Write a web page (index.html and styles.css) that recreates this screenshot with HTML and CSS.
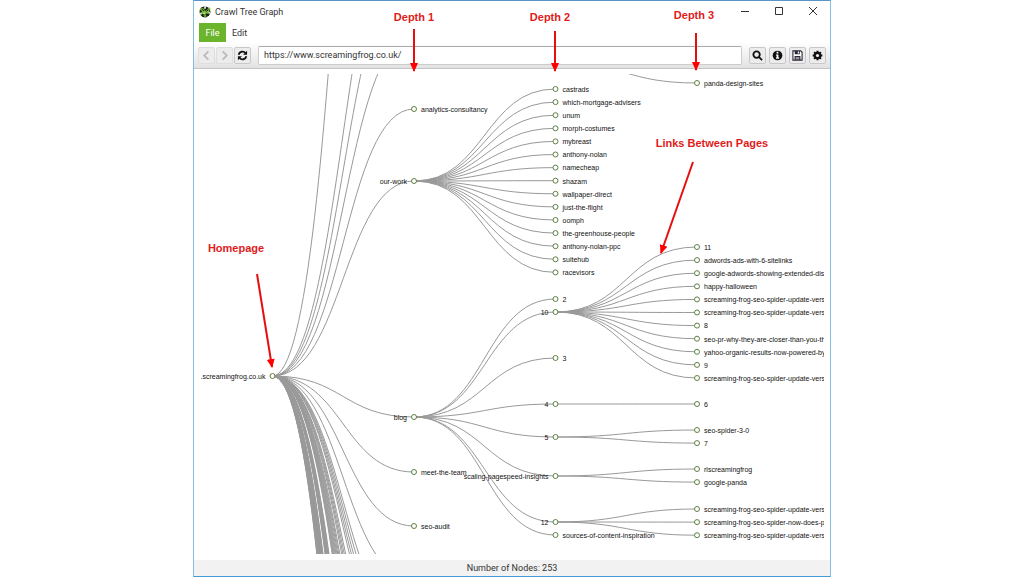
FILE: index.html
```html
<!DOCTYPE html>
<html lang="en">
<head>
<meta charset="utf-8">
<title>Crawl Tree Graph</title>
<link rel="stylesheet" href="styles.css">
</head>
<body>
<div class="window">
  <header class="titlebar">
    <svg class="app-icon" viewBox="0 0 24 24" aria-hidden="true">
      <path d="M4 3l6-2 7 1 5 5 1 6-3 6-6 4-7-1-5-5-1-7z" fill="#18240f"/>
      <path d="M1 7c2-4 6-4 9-1l2 4 4-2 4-6 3 3-3 5 2 3-4 3-3-1-2 1 2 6-5-1-2-5-4 1-3-3 4-2 1-2z" fill="#7cb83c"/>
      <path d="M11 1l3 1-1 4-3-1zM19 12l4 1-3 3zM8 13l4 1-2 2zM1 14l4 1-1 4z" fill="#fff"/>
      <path d="M5 6l5 4M15 11l4-4M7 17l4 1M14 17l3-1" stroke="#18240f" stroke-width="2"/>
    </svg>
    <h1 class="title">Crawl Tree Graph</h1>
    <div class="window-controls">
      <button class="wc" aria-label="Minimize"><svg viewBox="0 0 10 10"><path d="M1 5.5h8"/></svg></button>
      <button class="wc" aria-label="Maximize"><svg viewBox="0 0 10 10"><path d="M1.5 1.5h7v7h-7z"/></svg></button>
      <button class="wc" aria-label="Close"><svg viewBox="0 0 10 10"><path d="M1 1l8 8M9 1l-8 8"/></svg></button>
    </div>
  </header>
  <nav class="menu">
    <button class="menu-item active">File</button>
    <button class="menu-item">Edit</button>
  </nav>
  <div class="toolbar">
    <div class="group nav-group">
      <button class="tool" aria-label="Back" disabled><svg viewBox="0 0 12 12"><path class="line" d="M8 1.5L3.5 6 8 10.500"/></svg></button>
      <button class="tool" aria-label="Forward" disabled><svg viewBox="0 0 12 12"><path class="line" d="M4 1.5L8.5 6 4 10.5"/></svg></button>
      <button class="tool" aria-label="Refresh"><svg viewBox="0 0 12 12"><path class="line" d="M1.8 5.2A4.3 4.3 0 0 1 9.3 3.3M10.2 6.8A4.3 4.3 0 0 1 2.7 8.7"/><path d="M11 .8v4.400H6.600zM1 11.200V6.800h4.400z"/></svg></button>
    </div>
    <input class="address" type="text" aria-label="Address" value="https://www.screamingfrog.co.uk/">
    <div class="group">
      <button class="tool" aria-label="Search"><svg viewBox="0 0 12 12"><circle class="line" cx="5" cy="5" r="3.5"/><path class="line" d="M7.7 7.7L11 11"/></svg></button>
      <button class="tool" aria-label="Information"><svg viewBox="0 0 12 12"><circle cx="6" cy="6" r="5.3"/><path fill="#fff" d="M5 2h2v1.7H5zM4.3 4.8H7v3.400h.8v1.3H4.3V8.2H5V6h-.7z"/></svg></button>
      <button class="tool" aria-label="Save"><svg viewBox="0 0 12 12"><path fill="#fff" stroke="#2b2535" stroke-width="1.2" d="M1 1h8.5L11 2.5V11H1z"/><path fill="#2b2535" d="M3 1h5.5v3.5H3zM2.8 6.5h6.4V11H2.8z"/><path fill="#fff" d="M6.3 1.6h1.3v2.2H6.3zM4 7.5h4V8.3H4zM4 9.2h4v.8H4z"/></svg></button>
      <button class="tool" aria-label="Settings"><svg viewBox="0 0 12 12"><circle cx="6" cy="6" r="4.2"/><path stroke="#111" stroke-width="2.2" d="M6 .7v10.6M.7 6h10.6M2.3 2.3l7.4 7.4M9.7 2.3L2.3 9.7"/><circle cx="6" cy="6" r="1.7" fill="#eee"/></svg></button>
    </div>
  </div>
  <main class="pane"><svg class="graph" role="img" aria-label="Crawl tree"></svg></main>
  <footer class="status">Number of Nodes: 253</footer>
  <svg class="notes">
    <defs>
      <marker id="head" viewBox="0 0 9 9" refX="8" refY="4.5" markerWidth="9" markerHeight="9" markerUnits="userSpaceOnUse" orient="auto"><path d="M0 0.5L9 4.5L0 8.5z"/></marker>
    </defs>
    <path class="arrow" d="M220 28V70"/>
    <path class="arrow" d="M361 30V70"/>
    <path class="arrow" d="M502 32V69"/>
    <path class="arrow" d="M499 161L467 252"/>
    <path class="arrow" d="M63 273L78 366"/>
    <text x="220" y="20">Depth 1</text>
    <text x="356" y="20">Depth 2</text>
    <text x="500" y="18">Depth 3</text>
    <text x="518" y="146">Links Between Pages</text>
    <text x="42" y="251">Homepage</text>
  </svg>
</div>
<script src="graph.js"></script>
</body>
</html>
```

FILE: styles.css
```css
* { box-sizing: border-box; }

body {
  margin: 0;
  padding: 0 193px;
  background: #fff;
  color: #333;
  font-family: Roboto, "Open Sans", sans-serif;
  font-size: 9px;
}

button { font: inherit; padding: 0; border: 0; background: none; color: inherit; }

.window {
  position: relative;
  display: flex;
  flex-direction: column;
  height: 100vh;
  border: 1px solid #85bfde;
  border-top-color: #5b94c6;
  border-bottom-color: #469bd8;
  background: #fff;
}

.titlebar { display: flex; align-items: center; height: 22px; padding-left: 5px; }
.app-icon { width: 12px; height: 12px; margin-right: 4px; }
.title { margin: 0; font-size: 9px; font-weight: 400; flex: 1; }
.window-controls { display: flex; }
.wc { width: 34px; height: 22px; }
.wc svg { width: 10px; height: 10px; fill: none; stroke: #333; stroke-width: 1; }

.menu { display: flex; height: 19px; padding-left: 5px; }
.menu-item { width: 27px; }
.menu-item.active { background: #6bb52c; color: #fff; }

.toolbar {
  display: flex;
  align-items: center;
  gap: 7px;
  height: 27px;
  padding: 0 4px;
  background: linear-gradient(#fff, #e2e2e2);
  border-bottom: 1px solid #c4c4c4;
}
.group { display: flex; gap: 3px; }
.nav-group { gap: 1px; }
.tool {
  display: grid;
  place-items: center;
  width: 17px;
  height: 17px;
  border: 1px solid #c8c8c8;
  border-radius: 2px;
  background: #ececec;
}
.tool svg { width: 11px; height: 11px; fill: #111; }
.tool .line { fill: none; stroke: #111; stroke-width: 2; }
.tool:disabled { border-color: #dedede; }
.tool:disabled .line { stroke: #bbb; }
.address {
  flex: 1;
  min-width: 0;
  height: 19px;
  padding: 0 5px;
  border: 1px solid #ccc;
  border-top-color: #aaa;
  border-radius: 2px;
  background: #fff;
  color: #333;
  font: inherit;
}

.pane { flex: 1; min-height: 0; padding: 5px 6px 6px; }
.graph { display: block; width: 100%; height: 100%; overflow: hidden; }
.link { fill: none; stroke: #999; stroke-width: 1; }
.node { fill: #fff; stroke: #5d7f42; stroke-width: 1; }
.label { fill: #111; font: 7px "Liberation Sans", Arial, sans-serif; dominant-baseline: middle; }
.label.before { text-anchor: end; }

.status { height: 16px; line-height: 16px; background: #f2f2f2; text-align: center; }

.notes { position: absolute; inset: 0; width: 100%; height: 100%; pointer-events: none; }
.notes text { fill: #e01b1b; font: bold 11px "Liberation Sans", Arial, sans-serif; text-anchor: middle; }
.notes marker path { fill: #f00; }
.arrow { stroke: #e60f0f; stroke-width: 2; marker-end: url(#head); }
```

FILE: graph.js
```js
const ROOT_X = 72.5;
const COLUMN = 141.5;
const ROW = 13.1;
const SVG_NS = 'http://www.w3.org/2000/svg';

const leaves = (names, top) => names.map((name, i) => ({ name, y: top + i * ROW }));
const rows = (from, to) => {
  const list = [];
  for (let y = from; y <= to; y += ROW) list.push({ name: '', y });
  return list;
};

const tree = {
  name: '.screamingfrog.co.uk', y: 302,
  children: [
    { name: '', y: -712 }, { name: '', y: -184 }, { name: '', y: -110 }, { name: '', y: -38,
      children: [{ name: 'panda-design-sites', y: 9, parentY: -11, depth: 3 }] },
    { name: 'analytics-consultancy', y: 35 },
    { name: 'our-work', y: 107, children: leaves([
      'castrads', 'which-mortgage-advisers', 'unum', 'morph-costumes', 'mybreast',
      'anthony-nolan', 'namecheap', 'shazam', 'wallpaper-direct', 'just-the-flight',
      'oomph', 'the-greenhouse-people', 'anthony-nolan-ppc', 'suitehub', 'racevisors'], 15) },
    { name: 'blog', y: 343, children: [
      { name: '2', y: 225 },
      { name: '10', y: 238, children: leaves([
        '11', 'adwords-ads-with-6-sitelinks', 'google-adwords-showing-extended-dis',
        'happy-halloween', 'screaming-frog-seo-spider-update-vers',
        'screaming-frog-seo-spider-update-vers', '8',
        'seo-pr-why-they-are-closer-than-you-th', 'yahoo-organic-results-now-powered-by',
        '9', 'screaming-frog-seo-spider-update-vers'], 173) },
      { name: '3', y: 284 },
      { name: '4', y: 330, children: leaves(['6'], 330) },
      { name: '5', y: 363, children: leaves(['seo-spider-3-0', '7'], 356) },
      { name: 'scaling-pagespeed-insights', y: 402, children: leaves(['rlscreamingfrog', 'google-panda'], 395) },
      { name: '12', y: 448, children: leaves([
        'screaming-frog-seo-spider-update-vers', 'screaming-frog-seo-spider-now-does-p',
        'screaming-frog-seo-spider-update-vers'], 435) },
      { name: 'sources-of-content-inspiration', y: 461 },
    ] },
    { name: 'meet-the-team', y: 398 },
    { name: 'seo-audit', y: 452 },
    { name: '', y: 506 },
    ...rows(553, 608), ...rows(635, 676), ...rows(696, 817), ...rows(880, 992), ...rows(1048, 1311),
  ],
};

const svg = document.querySelector('.graph');
const linkLayer = svg.appendChild(document.createElementNS(SVG_NS, 'g'));
const nodeLayer = svg.appendChild(document.createElementNS(SVG_NS, 'g'));

function add(parent, tag, attributes, text) {
  const element = document.createElementNS(SVG_NS, tag);
  for (const [key, value] of Object.entries(attributes)) element.setAttribute(key, value);
  if (text) element.textContent = text;
  parent.appendChild(element);
}

function draw(node, depth) {
  const x = ROOT_X + depth * COLUMN;
  for (const child of node.children || []) {
    const level = child.depth || depth + 1;
    const endX = ROOT_X + level * COLUMN;
    const startX = endX - COLUMN;
    const startY = child.parentY ?? node.y;
    const middle = (startX + endX) / 2;
    add(linkLayer, 'path', { class: 'link', d: `M${startX} ${startY}C${middle} ${startY} ${middle} ${child.y} ${endX} ${child.y}` });
    draw(child, level);
  }
  if (!node.name) return;
  add(nodeLayer, 'circle', { class: 'node', cx: x, cy: node.y, r: 2.5 });
  const before = Boolean(node.children);
  add(nodeLayer, 'text', { class: before ? 'label before' : 'label', x: before ? x - 7 : x + 7, y: node.y + 1 }, node.name);
}

draw(tree, 0);
```
